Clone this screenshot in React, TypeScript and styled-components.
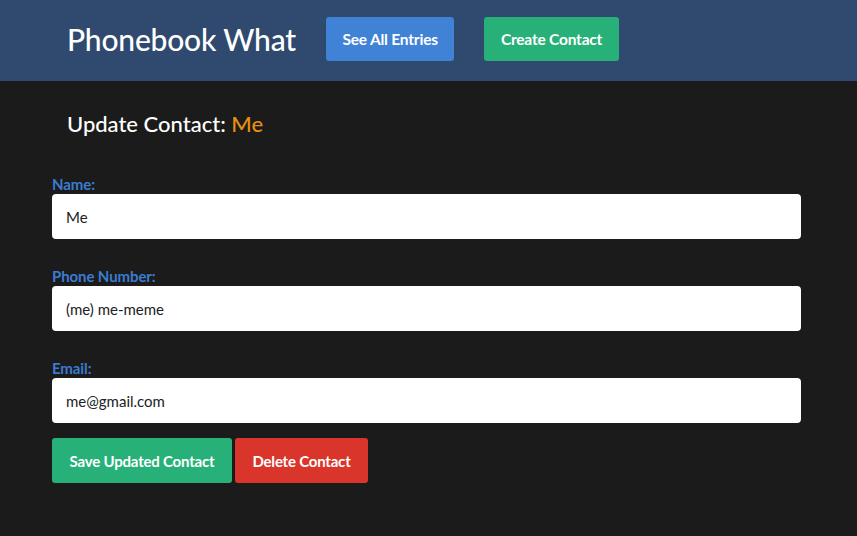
import styled, { createGlobalStyle } from "styled-components";

const GlobalStyle = createGlobalStyle`
  html, body {
    margin: 0;
    padding: 0;
    background: #1b1b1b;
    font-family: Lato, "Open Sans", sans-serif;
  }
  * { box-sizing: border-box; }
`;

export default function App() {
  return (
    <>
      <GlobalStyle />
      <Header>
        <Title>Phonebook What</Title>
        <NavButton $color="#3f82d6">See All Entries</NavButton>
        <NavButton $color="#27b178">Create Contact</NavButton>
      </Header>
      <Main>
        <Heading>
          Update Contact: <Accent>Me</Accent>
        </Heading>
        <Form>
          <Field>
            <Label>Name:</Label>
            <Input defaultValue="Me" />
          </Field>
          <Field>
            <Label>Phone Number:</Label>
            <Input defaultValue="(me) me-meme" />
          </Field>
          <Field>
            <Label>Email:</Label>
            <Input defaultValue="me@gmail.com" />
          </Field>
          <Actions>
            <ActionButton $color="#27b178" $width={180}>Save Updated Contact</ActionButton>
            <ActionButton $color="#d9352b" $width={133}>Delete Contact</ActionButton>
          </Actions>
        </Form>
      </Main>
    </>
  );
}

const Header = styled.header`
  background: #2f4a6e;
  height: 81px;
  display: flex;
  align-items: center;
  padding-left: 67px;
  gap: 30px;
`;

const Title = styled.h1`
  color: white;
  font-size: 30px;
  font-weight: 500;
  margin: 0 0 4px;
  letter-spacing: -0.2px;
`;

const NavButton = styled.button<{ $color: string }>`
  background: ${(p) => p.$color};
  color: white;
  border: none;
  border-radius: 3px;
  height: 44px;
  padding: 0 16.5px;
  font-family: inherit;
  font-size: 15.5px;
  font-weight: 700;
  letter-spacing: -0.2px;
  margin-bottom: 3px;
`;

const Main = styled.main`
  padding: 29px 56px 40px 52px;
`;

const Heading = styled.h2`
  color: white;
  font-size: 22px;
  font-weight: 500;
  margin: 0 0 39px 15px;
`;

const Accent = styled.span`
  color: #e8900f;
`;

const Form = styled.form`
  display: flex;
  flex-direction: column;
`;

const Field = styled.div`
  display: flex;
  flex-direction: column;
  margin-bottom: 29px;

  &:nth-last-child(2) {
    margin-bottom: 15px;
  }
`;

const Label = styled.label`
  color: #3c7bd0;
  font-size: 15px;
  font-weight: 700;
  line-height: 17px;
  margin-bottom: 1px;
  letter-spacing: -0.1px;
`;

const Input = styled.input`
  height: 45px;
  border: none;
  border-radius: 4px;
  background: white;
  padding: 0 14px;
  font-family: inherit;
  font-size: 15px;
  color: #222;
  outline: none;
`;

const Actions = styled.div`
  display: flex;
  gap: 3px;
`;

const ActionButton = styled.button<{ $color: string; $width: number }>`
  background: ${(p) => p.$color};
  width: ${(p) => p.$width}px;
  height: 45px;
  color: white;
  border: none;
  border-radius: 3px;
  font-family: inherit;
  font-size: 15px;
  font-weight: 700;
  letter-spacing: -0.2px;
`;
